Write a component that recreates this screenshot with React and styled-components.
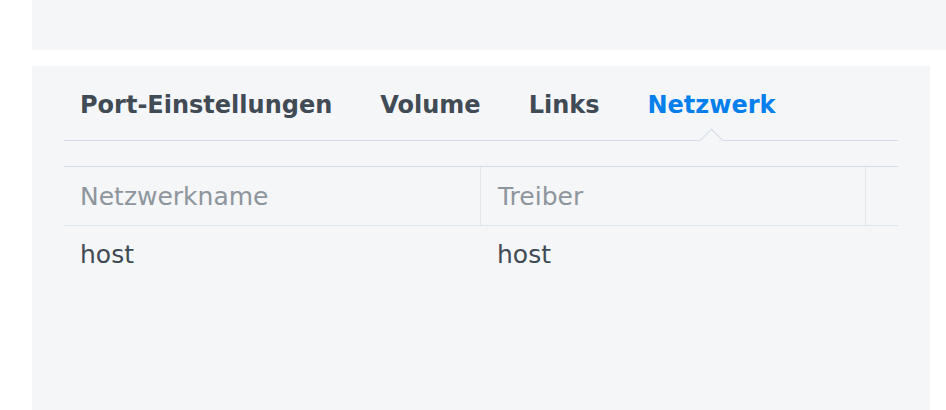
import React from "react";
import styled, { createGlobalStyle } from "styled-components";

const Global = createGlobalStyle`
  html, body { margin: 0; padding: 0; background: #ffffff; }
  body { font-family: "DejaVu Sans", Verdana, sans-serif; }
  * { box-sizing: border-box; }
`;

const Page = styled.div`
  width: 946px;
  height: 410px;
  padding-left: 32px;
  display: flex;
  flex-direction: column;
  gap: 16px;
  overflow: hidden;
`;

const TopPanel = styled.div`
  height: 50px;
  background: #f5f6f8;
`;

const Panel = styled.div`
  flex: 1;
  margin-right: 16px;
  background: #f5f6f8;
  padding: 0 32px;
`;

const TabBar = styled.div`
  display: flex;
  gap: 48px;
  padding-left: 16px;
  border-bottom: 1px solid #d5dee8;
`;

const Tab = styled.div`
  position: relative;
  padding: 25px 0 21px;
  font-size: 24px;
  line-height: 28px;
  font-weight: bold;
  color: ${(p) => (p.$active ? "#057feb" : "#414b55")};
  white-space: nowrap;
`;

const Caret = styled.span`
  position: absolute;
  left: 50%;
  bottom: -9px;
  width: 17px;
  height: 17px;
  margin-left: -8.5px;
  background: #f5f6f8;
  border-top: 1px solid #d5dee8;
  border-left: 1px solid #d5dee8;
  transform: rotate(45deg);
`;

const Table = styled.div`
  margin-top: 25px;
  border-top: 1px solid #d5dee8;
`;

const Row = styled.div`
  display: grid;
  grid-template-columns: 416px 385px 1fr;
  border-bottom: ${(p) => (p.$head ? "1px solid #dde5ec" : "none")};
`;

const Cell = styled.div`
  padding: ${(p) => (p.$head ? "16px 16px 14px" : "15px 16px")};
  padding-left: ${(p) => (p.$first ? "16px" : "17px")};
  font-size: 25px;
  line-height: 28px;
  color: ${(p) => (p.$head ? "#8d959d" : "#414b55")};
  border-left: ${(p) =>
    p.$head && !p.$first ? "1px solid #dfe6ec" : "none"};
  white-space: nowrap;
`;

const tabs = ["Port-Einstellungen", "Volume", "Links", "Netzwerk"];
const columns = ["Netzwerkname", "Treiber", ""];
const rows = [["host", "host", ""]];

export default function App() {
  return (
    <>
      <Global />
      <Page>
        <TopPanel />
        <Panel>
          <TabBar>
            {tabs.map((t) => (
              <Tab key={t} $active={t === "Netzwerk"}>
                {t}
                {t === "Netzwerk" && <Caret />}
              </Tab>
            ))}
          </TabBar>
          <Table>
            <Row $head>
              {columns.map((c, i) => (
                <Cell key={i} $head $first={i === 0}>
                  {c}
                </Cell>
              ))}
            </Row>
            {rows.map((r, ri) => (
              <Row key={ri}>
                {r.map((c, i) => (
                  <Cell key={i} $first={i === 0}>
                    {c}
                  </Cell>
                ))}
              </Row>
            ))}
          </Table>
        </Panel>
      </Page>
    </>
  );
}
